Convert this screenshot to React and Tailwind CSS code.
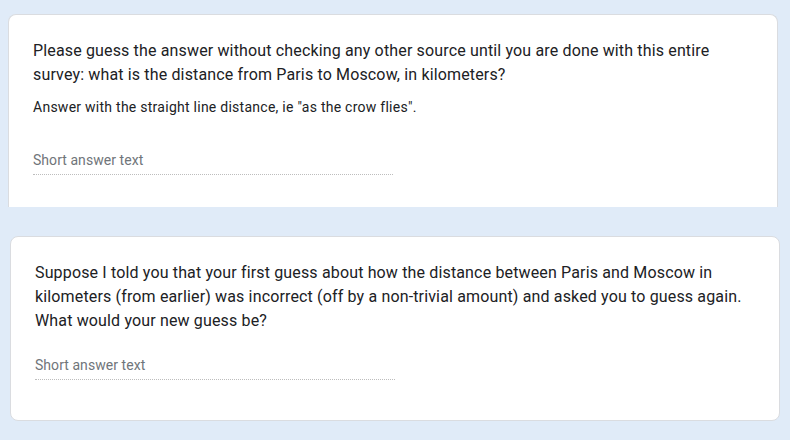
export default function App() {
  return (
    <div className="w-[790px] h-[440px] bg-[#e0ebf8] overflow-hidden pt-[14px]" style={{ fontFamily: "Roboto, 'Noto Sans', sans-serif" }}>
      <div className="ml-[8px] w-[770px] bg-white border border-b-0 border-[#dadce0] rounded-t-lg px-6 pt-6 pb-8">
        <div className="text-[16px] leading-6 text-[#202124] tracking-[0.15px]">
          Please guess the answer without checking any other source until you are done with this entire survey: what is the distance from Paris to Moscow, in kilometers?
        </div>
        <div className="mt-[10px] text-[14px] leading-5 text-[#202124] tracking-[0.26px]">
          Answer with the straight line distance, ie "as the crow flies".
        </div>
        <div className="mt-[33px] w-1/2 text-[14px] leading-5 text-[#70757a] tracking-[0.05px] pb-1 border-b border-dotted border-[#bdbdbd]">
          Short answer text
        </div>
      </div>
      <div className="mt-[29px] ml-[10px] w-[770px] bg-white border border-[#dadce0] rounded-lg px-6 pt-6 pb-[40px]">
        <div className="text-[16px] leading-6 text-[#202124] tracking-[0.15px]">
          Suppose I told you that your first guess about how the distance between Paris and Moscow in kilometers (from earlier) was incorrect (off by a non-trivial amount) and asked you to guess again. What would your new guess be?
        </div>
        <div className="mt-[22px] w-1/2 text-[14px] leading-5 text-[#70757a] tracking-[0.05px] pb-1 border-b border-dotted border-[#bdbdbd]">
          Short answer text
        </div>
      </div>
    </div>
  );
}
